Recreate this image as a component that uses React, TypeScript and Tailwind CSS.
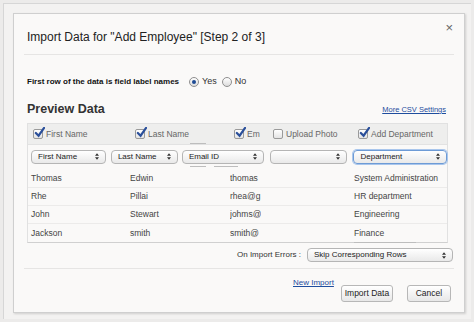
import React from "react";

const font = { fontFamily: '"Liberation Sans", Arial, sans-serif' };

const Check = ({ on }: { on: boolean }) => (
  <span className="relative inline-block w-[10px] h-[10px] border border-[#9a9a9a] rounded-[2px] bg-gradient-to-b from-white to-[#e4e4e4] mr-[3px]">
    {on && (
      <svg viewBox="0 0 12 12" className="absolute left-[0px] top-[-3px] w-[11px] h-[11px]">
        <path d="M2 6.5 L5 9.5 L11 1" stroke="#2a4f9a" strokeWidth="2.4" fill="none" strokeLinecap="round" />
      </svg>
    )}
  </span>
);

const Select = ({ label, w, focus }: { label: string; w: string; focus?: boolean }) => (
  <div
    className={`flex items-center justify-between h-[14px] rounded-[4px] border ${
      focus ? "border-[#6d9bd6] shadow-[0_0_0_1px_#a9c6ec]" : "border-[#b5b5b5]"
    } bg-gradient-to-b from-white to-[#e9e9e9] px-[6px] ${w}`}
  >
    <span className="text-[8px] text-[#222] whitespace-nowrap">{label}</span>
    <svg viewBox="0 0 6 10" className="w-[4px] h-[7px]">
      <path d="M3 0 L6 4 H0 Z M3 10 L0 6 H6 Z" fill="#333" />
    </svg>
  </div>
);

const Radio = ({ on }: { on: boolean }) => (
  <span className="inline-flex items-center justify-center w-[10px] h-[10px] rounded-full border border-[#8f8f8f] bg-gradient-to-b from-white to-[#dcdcdc]">
    {on && <span className="w-[4px] h-[4px] rounded-full bg-[#1e4b94]" />}
  </span>
);

const rows = [
  ["Thomas", "Edwin", "thomas", "System Administration"],
  ["Rhe", "Pillai", "rhea@g", "HR department"],
  ["John", "Stewart", "johms@", "Engineering"],
  ["Jackson", "smith", "smith@", "Finance"],
];

export default function App() {
  return (
    <div className="w-[474px] h-[322px] bg-[#ecebea] pt-[3px] pl-[3px]" style={font}>
      <div className="w-[468px] h-[316px] border-l border-t border-[#d6d6d6] bg-[#f3f2f1] pt-[9px] pl-[9px]">
        <div className="w-[452px] h-[300px] border border-[#cfcfcf] bg-[#faf9f8] shadow-[1px_1px_2px_rgba(0,0,0,0.15)] flex flex-col">
          {/* header */}
          <div className="flex justify-between items-start px-[10px] pt-[7px]">
            <div className="pl-[3px] pt-[7px] text-[12px] text-[#222]">Import Data for "Add Employee" [Step 2 of 3]</div>
            <span className="text-[13px] text-[#666] leading-none mr-[1px]">×</span>
          </div>
          <div className="mx-[10px] mt-[8px] h-px bg-[#e6e5e4]" />

          <div className="px-[13px] flex items-center mt-[20px]">
            <span className="w-[162px] text-[8px] font-bold text-[#111] whitespace-nowrap">First row of the data is field label names</span>
            <span className="flex items-center gap-[3px] text-[9px] text-[#333]">
              <Radio on /> Yes
            </span>
            <span className="ml-[5px] flex items-center gap-[3px] text-[9px] text-[#333]">
              <Radio on={false} /> No
            </span>
          </div>

          <div className="px-[13px] mt-[11px] flex justify-between items-end">
            <span className="text-[12.5px] font-bold text-[#333]">Preview Data</span>
            <span className="text-[7.5px] text-[#1f4d9e] underline mr-[5px] mb-[3px]">More CSV Settings</span>
          </div>

          {/* table */}
          <div className="mx-[13px] mt-[5px] w-[421px] border border-[#e1e1e1] border-b-[#d0d0d0] bg-[#faf9f8]">
            <div className="h-[21px] bg-[#eeeeed] border-b border-[#e2e2e2] flex items-center text-[8.5px] text-[#666] whitespace-nowrap">
              <span className="w-[107px] pl-[5px] flex items-center"><Check on />First Name</span>
              <span className="w-[99px] flex items-center"><Check on />Last Name</span>
              <span className="w-[39px] flex items-center"><Check on />Em</span>
              <span className="w-[85px] flex items-center"><Check on={false} />Upload Photo</span>
              <span className="flex items-center"><Check on />Add Department</span>
            </div>
            <div className="relative h-[25px] flex items-center pl-[3px] gap-[4px] pb-[2px]">
              <Select label="First Name" w="w-[76px]" />
              <Select label="Last Name" w="w-[68px] ml-[1px]" />
              <Select label="Email ID" w="w-[83px]" />
              <Select label="" w="w-[79px] ml-[2px]" />
              <Select label="Department" w="w-[95px] ml-[2px]" focus />
              <span className="absolute left-[162px] top-[-2px] w-[16px] h-px bg-[#bdbdbd]" />
              <span className="absolute left-[162px] top-[21px] w-[16px] h-px bg-[#bdbdbd]" />
              <span className="absolute left-[186px] top-[21px] w-[24px] h-px bg-[#bdbdbd]" />
            </div>
            {rows.map((r, i) => (
              <div
                key={i}
                className={`h-[18px] flex items-center text-[8.5px] text-[#444] whitespace-nowrap ${i < 3 ? "border-b border-[#ecebea]" : ""}`}
              >
                <span className="w-[102px] pl-[3px]">{r[0]}</span>
                <span className="w-[100px]">{r[1]}</span>
                <span className="w-[124px]">
                  <span className="block w-[31px] overflow-hidden">{r[2]}</span>
                </span>
                <span>{r[3]}</span>
              </div>
            ))}
          </div>
          <div className="ml-[340px] w-[62px] h-px bg-[#bdbdbd] -mt-[1px]" />

          <div className="flex items-center justify-end pr-[11px] mt-[5px]">
            <span className="text-[8px] text-[#333] mr-[6px] whitespace-nowrap">On Import Errors :</span>
            <Select label="Skip Corresponding Rows" w="w-[146px]" />
          </div>
          <div className="mx-[10px] mt-[6px] h-px bg-[#e6e5e4]" />

          <div className="flex items-start px-[13px] mt-[6px] whitespace-nowrap">
            <span className="ml-[266px] text-[8px] text-[#1f4d9e] underline mt-[2px]">New Import</span>
            <button className="ml-[7px] mt-[10px] h-[17px] w-[52px] rounded-[3px] border border-[#b7b7b7] bg-gradient-to-b from-white to-[#e8e8e8] text-[8.5px] text-[#222]">
              Import Data
            </button>
            <button className="ml-[14px] mt-[10px] h-[17px] w-[44px] rounded-[3px] border border-[#b7b7b7] bg-gradient-to-b from-white to-[#e8e8e8] text-[8.5px] text-[#222]">
              Cancel
            </button>
          </div>
        </div>
      </div>
    </div>
  );
}
